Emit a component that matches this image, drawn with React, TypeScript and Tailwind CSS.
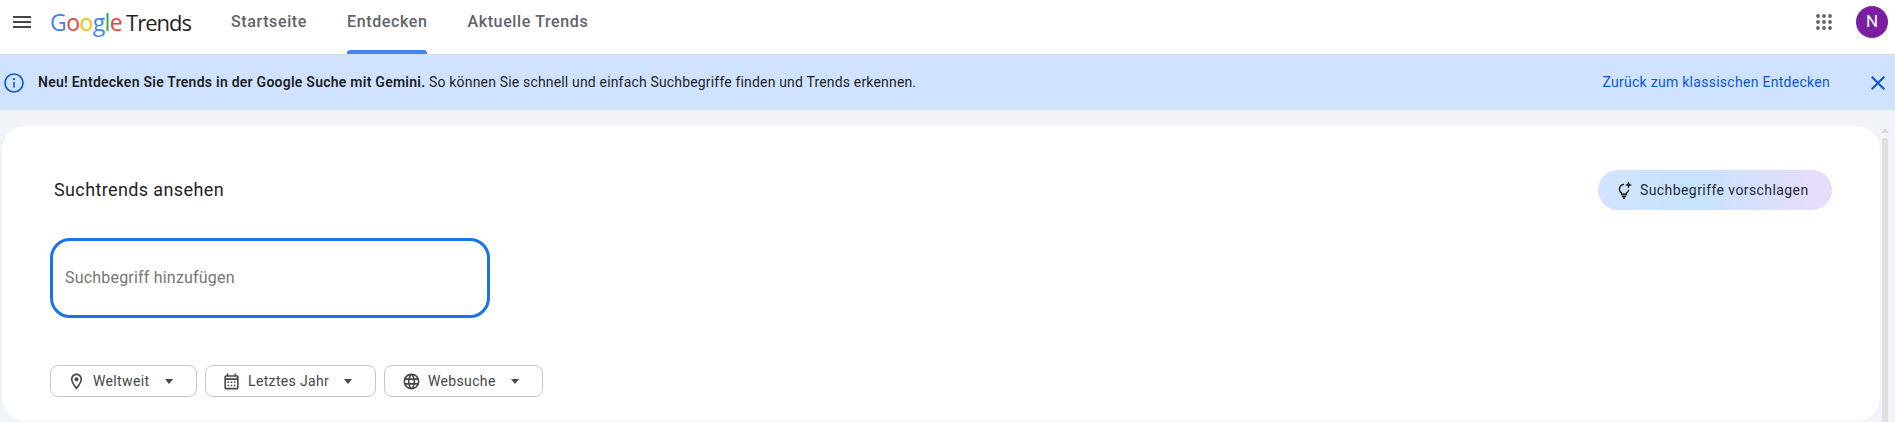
import { MdClose, MdLanguage, MdOutlineCalendarMonth, MdOutlineLocationOn } from "react-icons/md";

const filters = [
  { label: "Weltweit", icon: "pin", box: "w-[147px] pl-[16px]" },
  { label: "Letztes Jahr", icon: "calendar", box: "w-[171px] pl-[16px]" },
  { label: "Websuche", icon: "globe", box: "w-[159px] pl-[17px]" },
];

function FilterIcon({ name }: { name: string }) {
  if (name === "pin") return <MdOutlineLocationOn size={19} />;
  if (name === "calendar") return <MdOutlineCalendarMonth size={19} />;
  return <MdLanguage size={19} />;
}

function AppsIcon() {
  return (
    <svg width="16" height="16" viewBox="0 0 16 16" fill="#5f6368">
      {[2, 8, 14].map((cy) =>
        [2, 8, 14].map((cx) => <circle key={`${cx}-${cy}`} cx={cx} cy={cy} r="1.9" />)
      )}
    </svg>
  );
}

function BulbIcon() {
  return (
    <svg width="16" height="18" viewBox="0 0 16 18" fill="none" stroke="#1f1f1f" strokeWidth="1.4">
      <path d="M7 3.4a4.7 4.7 0 0 0-2.4 8.6v1.3h4.8V12a4.7 4.7 0 0 0 2.3-3.4" />
      <path d="M4.8 15.3h4.4M5.7 17h2.6" />
      <path d="M11.5 0.4l1 2.6 2.6 1-2.6 1-1 2.6-1-2.6-2.6-1 2.6-1z" fill="#1f1f1f" stroke="none" />
    </svg>
  );
}

export default function App() {
  return (
    <div className="flex h-[422px] w-[1895px] flex-col overflow-hidden bg-[#f0f4f9] font-['Roboto',sans-serif]">
      <header className="flex h-[55px] shrink-0 items-center border-b border-[#dadce0] bg-white pb-[10px]">
        <div className="ml-[13px] flex h-[12px] w-[18px] flex-col justify-between">
          <span className="h-[2px] bg-[#444746]" />
          <span className="h-[2px] bg-[#444746]" />
          <span className="h-[2px] bg-[#444746]" />
        </div>
        <div className="ml-[19px] flex w-[150px] items-baseline font-['Open_Sans',sans-serif] text-[23px] leading-none">
          <span className="font-medium tracking-[-0.6px] text-[#4285f4]">G</span>
          <span className="font-medium tracking-[-0.6px] text-[#ea4335]">o</span>
          <span className="font-medium tracking-[-0.6px] text-[#fbbc05]">o</span>
          <span className="font-medium tracking-[-0.6px] text-[#4285f4]">g</span>
          <span className="font-medium tracking-[-0.6px] text-[#34a853]">l</span>
          <span className="font-medium tracking-[-0.6px] text-[#ea4335]">e</span>
          <span className="ml-[4px] text-[22px] tracking-[-1px] text-[#1f1f1f]">Trends</span>
        </div>
        <nav className="mb-[-10px] ml-[31px] flex items-start gap-[40px] self-stretch text-[16px] font-medium tracking-[0.62px] text-[#5f6368]">
          <a className="pt-[12px] leading-[20px]">Startseite</a>
          <a className="relative h-full pt-[12px] leading-[20px]">
            Entdecken
            <span className="absolute bottom-0 left-0 h-[4px] w-full rounded-t-[3px] bg-[#4285f4]" />
          </a>
          <a className="pt-[12px] leading-[20px]">Aktuelle Trends</a>
        </nav>
        <div className="ml-auto mr-[7px] flex items-center gap-[24px]">
          <AppsIcon />
          <div className="flex h-[32px] w-[32px] items-center justify-center rounded-full bg-[#7b1fa2] text-[17px] text-white">
            N
          </div>
        </div>
      </header>

      <div className="flex h-[55px] shrink-0 items-center bg-[#cfe2ff] text-[14px] tracking-[0.17px] text-[#1f1f1f]">
        <svg className="ml-[4px]" width="20" height="20" viewBox="0 0 20 20" fill="none" stroke="#0b57d0" strokeWidth="1.6">
          <circle cx="10" cy="10" r="9" />
          <path d="M10 9v5.5" />
          <circle cx="10" cy="6.2" r="1.1" fill="#0b57d0" stroke="none" />
        </svg>
        <p className="ml-[14px]">
          <span className="font-semibold tracking-[0.25px]">Neu! Entdecken Sie Trends in der Google Suche mit Gemini.</span>{" "}
          So können Sie schnell und einfach Suchbegriffe finden und Trends erkennen.
        </p>
        <a className="ml-auto tracking-[0.28px] text-[#0b57d0]">Zurück zum klassischen Entdecken</a>
        <MdClose className="ml-[36px] mr-[5px] text-[#0b57d0]" size={24} />
      </div>

      <div className="flex min-h-0 flex-1 pt-[16px]">
        <main className="mb-[1px] ml-[2px] flex-1 rounded-[24px] bg-white pl-[52px] pr-[48px] pt-[44px]">
          <div className="flex items-center justify-between">
            <h1 className="text-[18px] leading-[24px] tracking-[0.38px] text-[#1f1f1f]">Suchtrends ansehen</h1>
            <button
              type="button"
              className="flex h-[40px] w-[234px] items-center rounded-full bg-gradient-to-r from-[#d3e3fd] via-[#c6e3fd] via-40% to-[#eadbfb] pl-[19px] text-[14px] tracking-[0.42px] text-[#1f2a3a]"
            >
              <BulbIcon />
              <span className="ml-[7px]">Suchbegriffe vorschlagen</span>
            </button>
          </div>

          <div className="ml-[-4px] mt-[28px] flex h-[80px] w-[440px] items-center rounded-[20px] border-[3px] border-[#1a73e8] pl-[12px] text-[16px] tracking-[0.2px] text-[#757575]">
            Suchbegriff hinzufügen
          </div>

          <div className="ml-[-4px] mt-[47px] flex gap-[8px]">
            {filters.map((item) => (
              <button
                key={item.label}
                type="button"
                className={`flex h-[32px] ${item.box} items-center gap-[7px] rounded-[8px] border border-[#c4c7c5] pr-[23px] text-[14px] tracking-[0.35px] text-[#444746]`}
              >
                <FilterIcon name={item.icon} />
                <span>{item.label}</span>
                <span className="ml-auto h-0 w-0 border-x-[4.5px] border-t-[5px] border-x-transparent border-t-[#444746]" />
              </button>
            ))}
          </div>
        </main>
        <aside className="flex w-[15px] shrink-0 flex-col pl-[2px] pt-[2px]">
          <div className="flex w-[6px] flex-1 flex-col items-center">
            <span className="h-0 w-0 border-x-[4px] border-b-[5px] border-x-transparent border-b-[#dcdcdc]" />
            <div className="mt-[5px] w-[6px] flex-1 rounded-t-full bg-[#dfdfdf]" />
          </div>
        </aside>
      </div>
    </div>
  );
}
